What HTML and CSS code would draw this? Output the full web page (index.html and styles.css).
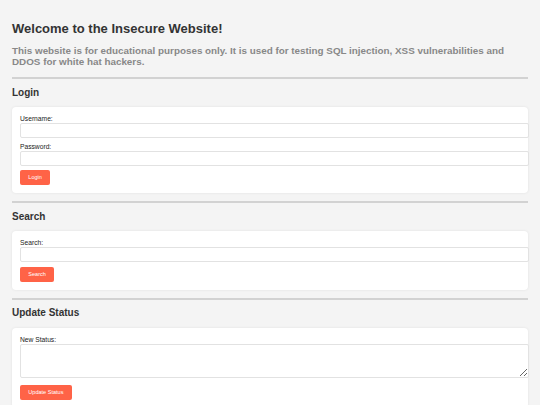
FILE: index.html
```html
<!DOCTYPE html>
<html lang="en">
<head>
<meta charset="utf-8">
<title>Insecure Website</title>
<link rel="stylesheet" href="styles.css">
</head>
<body>
<h1 class="title">Welcome to the Insecure Website!</h1>
<p class="intro">This website is for educational purposes only. It is used for testing SQL injection, XSS vulnerabilities and DDOS for white hat hackers.</p>

<hr class="rule">
<h2 class="section-title">Login</h2>
<form class="card">
  <label class="field-label" for="username">Username:</label>
  <input class="field" id="username" type="text">
  <label class="field-label" for="password">Password:</label>
  <input class="field" id="password" type="password">
  <button class="btn" type="button">Login</button>
</form>

<hr class="rule">
<h2 class="section-title">Search</h2>
<form class="card">
  <label class="field-label" for="search">Search:</label>
  <input class="field" id="search" type="text">
  <button class="btn" type="button">Search</button>
</form>

<hr class="rule">
<h2 class="section-title">Update Status</h2>
<form class="card">
  <label class="field-label" for="status">New Status:</label>
  <textarea class="field field-area" id="status"></textarea>
  <button class="btn" type="button">Update Status</button>
</form>
</body>
</html>
```
FILE: styles.css
```css
html, body {
  margin: 0;
  padding: 0;
}
body {
  background: #f4f4f4;
  font-family: "Liberation Sans", Arial, Helvetica, sans-serif;
  color: #333;
  padding: 0 12px;
  display: flex;
  flex-direction: column;
  overflow: hidden;
}
.title {
  font-size: 13px;
  line-height: 15px;
  font-weight: bold;
  color: #333;
  margin: 21px 0 0;
}
.intro {
  font-size: 9.85px;
  line-height: 10.6px;
  font-weight: bold;
  color: #888;
  margin: 10px 0 0;
}
.rule {
  border: 0;
  height: 2px;
  background: #d2d2d2;
  margin: 10px 0 0;
}
.card + .rule {
  margin-top: 8px;
}
.section-title {
  font-size: 10px;
  line-height: 12px;
  font-weight: bold;
  color: #333;
  margin: 7.6px 0 0;
}
.card {
  background: #fff;
  border-radius: 4px;
  box-shadow: 0 0 3px rgba(0, 0, 0, 0.08);
  padding: 8px;
  margin-top: 8.3px;
  display: flex;
  flex-direction: column;
  align-items: flex-start;
}
.field-label {
  font-size: 6.7px;
  line-height: 8px;
  color: #222;
}
.field {
  display: block;
  width: 100%;
  height: 13px;
  padding: 0 3.5px;
  border: 1px solid #e2e2e2;
  border-radius: 2px;
  background: #fff;
  margin: 0 0 4.6px;
  font: inherit;
  box-sizing: content-box;
}
.field-area {
  height: 32px;
  resize: vertical;
  margin-bottom: 7px;
}
.btn {
  font-family: "Liberation Sans", Arial, Helvetica, sans-serif;
  font-size: 5.56px;
  line-height: 7px;
  padding: 4px 8.3px;
  border: 0;
  border-radius: 2px;
  background: #ff6347;
  color: #fff;
}
```
